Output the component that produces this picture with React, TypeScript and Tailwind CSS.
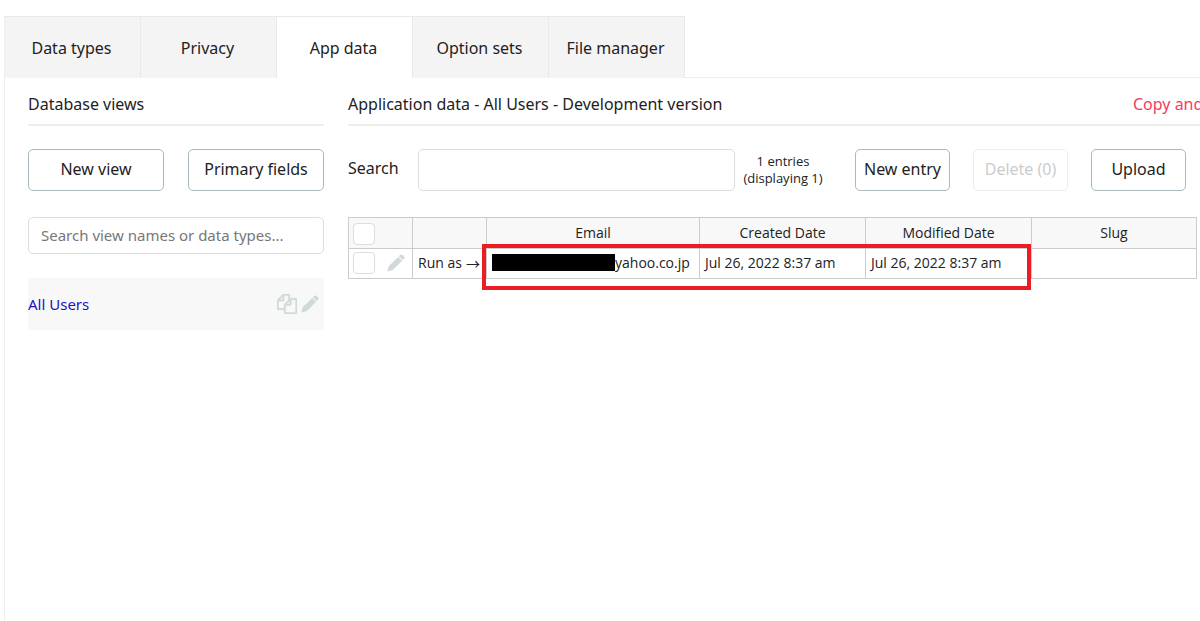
import { useState } from "react";
import { clsx } from "clsx";

const TABS = ["Data types", "Privacy", "App data", "Option sets", "File manager"];

const COLUMNS = ["Email", "Created Date", "Modified Date", "Slug"];

function PencilIcon({ className }: { className?: string }) {
  return (
    <svg viewBox="0 0 18 18" className={className} fill="currentColor" aria-hidden="true">
      <path d="M13 1.1q1.4-1.2 2.7 0l1.2 1.2q1.2 1.3 0 2.6l-1.2 1.2-3.9-3.8z" />
      <path d="M11.2 2.9l3.9 3.9-9.3 9.3L1 17.5q-.7 0-.6-.7l1.5-4.7z" />
    </svg>
  );
}

function CopyIcon({ className }: { className?: string }) {
  return (
    <svg
      viewBox="0 0 1792 1792"
      className={className}
      fill="currentColor"
      stroke="currentColor"
      strokeWidth="40"
      aria-hidden="true"
    >
      <path d="M1696 384q40 0 68 28t28 68v1216q0 40-28 68t-68 28h-960q-40 0-68-28t-28-68v-288h-544q-40 0-68-28t-28-68v-672q0-40 20-88t48-76l408-408q28-28 76-48t88-20h416q40 0 68 28t28 68v328q68-40 128-40h416zm-544 213l-299 299h299v-299zm-640-384l-299 299h299v-299zm196 647l316-316v-416h-384v416q0 40-28 68t-68 28h-416v640h512v-256q0-40 20-88t48-76zm956 804v-1152h-384v416q0 40-28 68t-68 28h-416v640h896z" />
    </svg>
  );
}

interface OutlineButtonProps {
  label: string;
  className: string;
  disabled?: boolean;
}

function OutlineButton({ label, className, disabled }: OutlineButtonProps) {
  return (
    <button
      type="button"
      disabled={disabled}
      className={clsx(
        "h-[42px] shrink-0 whitespace-nowrap rounded-[5px] border bg-white pb-[3px]",
        disabled ? "border-[#eceeee] text-[#cccccc]" : "border-[#a9b9bd]",
        className
      )}
    >
      {label}
    </button>
  );
}

function RowCheckbox({ label }: { label: string }) {
  return (
    <input
      type="checkbox"
      aria-label={label}
      className="block size-[22px] shrink-0 appearance-none rounded border border-[#dddddd] bg-white checked:bg-[#a9b9bd]"
    />
  );
}

function Sidebar() {
  return (
    <aside className="w-[296px] shrink-0">
      <h2 className="border-b-2 border-[#eeeeee] pb-2">Database views</h2>
      <div className="mt-[23px] flex gap-6">
        <OutlineButton label="New view" className="flex-1" />
        <OutlineButton label="Primary fields" className="flex-1" />
      </div>
      <input
        type="text"
        aria-label="Search views"
        placeholder="Search view names or data types..."
        className="mt-[26px] block h-[37px] w-full rounded-[5px] border border-[#dddddd] px-3 pb-[2px] text-[15px] placeholder:text-[#777777]"
      />
      <div className="mt-6 flex h-[52px] items-center bg-[#f8f8f8] pr-[5px]">
        <a href="#all-users" className="flex-1 text-[15px] text-[#1c11c4]">
          All Users
        </a>
        <div className="flex items-center gap-1 text-[#cfd9db]">
          <button type="button" aria-label="Duplicate view">
            <CopyIcon className="size-5" />
          </button>
          <button type="button" aria-label="Edit view">
            <PencilIcon className="size-[18px]" />
          </button>
        </div>
      </div>
    </aside>
  );
}

function Toolbar() {
  return (
    <div className="mt-[23px] flex items-center pr-[14px]">
      <label htmlFor="entry-search" className="w-[70px] shrink-0 pb-1">
        Search
      </label>
      <input
        id="entry-search"
        type="text"
        className="h-[42px] min-w-0 flex-1 rounded-[5px] border border-[#dddddd] px-3"
      />
      <p className="w-[120px] shrink-0 pr-6 text-center font-['Open_Sans',sans-serif] text-[13px] leading-[17px]">
        1 entries
        <br />
        (displaying 1)
      </p>
      <div className="flex gap-[23px]">
        <OutlineButton label="New entry" className="w-[95px]" />
        <OutlineButton label="Delete (0)" className="w-[95px]" disabled />
        <OutlineButton label="Upload" className="w-[95px]" />
      </div>
    </div>
  );
}

function EntriesTable() {
  return (
    <div className="relative mr-[3px] mt-[26px]">
      <table className="w-full table-fixed border-collapse border border-[#cccccc] font-['Open_Sans',sans-serif] text-sm leading-5">
        <colgroup>
          <col className="w-16" />
          <col className="w-[74px]" />
          <col className="w-[213px]" />
          <col className="w-[166px]" />
          <col className="w-[166px]" />
          <col />
        </colgroup>
        <thead className="bg-[#f8f8f8]">
          <tr className="h-[31px]">
            <td className="border border-[#cccccc] pl-1 pt-[2px]">
              <RowCheckbox label="Select all entries" />
            </td>
            <td className="border border-[#cccccc]" />
            {COLUMNS.map((column) => (
              <th key={column} scope="col" className="border border-[#cccccc] font-normal">
                {column}
              </th>
            ))}
          </tr>
        </thead>
        <tbody>
          <tr className="h-[30px]">
            <td className="border border-[#cccccc] pb-[2px] pl-1">
              <div className="flex items-center gap-3">
                <RowCheckbox label="Select entry" />
                <button type="button" aria-label="Edit entry" className="text-[#cfd9db]">
                  <PencilIcon className="size-[18px]" />
                </button>
              </div>
            </td>
            <td className="whitespace-nowrap border border-[#cccccc] pb-[2px] pl-[5px]">
              <button type="button" className="flex items-center gap-1">
                Run as
                <span className="font-['Noto_Sans_CJK_JP',sans-serif]">→</span>
              </button>
            </td>
            <td className="border border-[#cccccc] pb-[2px] pl-[5px]">
              <div className="flex items-center">
                {/* Redacted part of the address */}
                <span className="h-[17px] w-[123px] bg-black" />
                <span>yahoo.co.jp</span>
              </div>
            </td>
            <td className="border border-[#cccccc] pb-[2px] pl-[5px]">Jul 26, 2022 8:37 am</td>
            <td className="border border-[#cccccc] pb-[2px] pl-[5px]">Jul 26, 2022 8:37 am</td>
            <td className="border border-[#cccccc]" />
          </tr>
        </tbody>
      </table>
      {/* Highlight around the user's details */}
      <div className="pointer-events-none absolute left-[134px] top-[27px] h-[46px] w-[549px] border-4 border-[#ec1c24]" />
    </div>
  );
}

export default function App() {
  const [activeTab, setActiveTab] = useState("App data");

  return (
    <div className="min-h-screen overflow-hidden bg-white pl-1 pt-4 font-['Noto_Sans',sans-serif] text-base text-[#222222]">
      <div className="min-h-screen border-l border-[#eeeeee]">
        <nav className="flex">
          {TABS.map((tab) => (
            <button
              key={tab}
              type="button"
              onClick={() => setActiveTab(tab)}
              className={clsx(
                "h-[62px] w-[136px] whitespace-nowrap border-r border-t border-[#e9e9e9] pr-[2px]",
                tab === activeTab ? "bg-white" : "bg-[#f4f4f4]"
              )}
            >
              {tab}
            </button>
          ))}
          <div className="flex-1 border-b border-[#eeeeee]" />
        </nav>

        <div className="flex gap-6 pl-[23px] pt-[14px]">
          <Sidebar />
          <main className="min-w-0 flex-1">
            <div className="flex justify-between border-b-2 border-[#eeeeee] pb-2">
              <h2>Application data - All Users - Development version</h2>
              <a
                href="#copy"
                className="w-[67px] shrink-0 overflow-hidden whitespace-nowrap text-[#f23d5e]"
              >
                Copy and
              </a>
            </div>
            <Toolbar />
            <EntriesTable />
          </main>
        </div>
      </div>
    </div>
  );
}
